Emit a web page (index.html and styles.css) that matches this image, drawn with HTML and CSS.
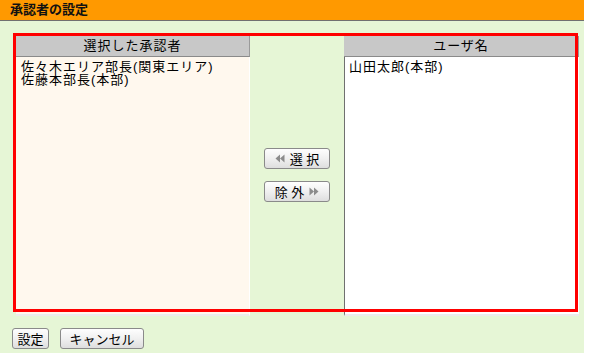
FILE: index.html
```html
<!DOCTYPE html>
<html lang="ja">
<head>
  <meta charset="UTF-8">
  <title>承認者の設定</title>
  <link rel="stylesheet" href="styles.css">
</head>
<body>
  <div class="page">
    <!-- Title -->
    <div class="title-bar">承認者の設定</div>

    <div class="panel">
      <!-- Approver chooser -->
      <div class="chooser">
        <div class="col">
          <div class="col-head">選択した承認者</div>
          <div class="list list-selected">
            <div class="item">佐々木エリア部長(関東エリア)</div>
            <div class="item">佐藤本部長(本部)</div>
          </div>
        </div>

        <div class="col-mid">
          <button class="btn btn-move">
            <svg class="arrow" width="10" height="9" viewBox="0 0 10 9"><path d="M5 0.5 L0.5 4.5 L5 8.5 Z M9.5 0.5 L5 4.5 L9.5 8.5 Z" fill="#8c8c8c"/></svg>
            <span>選 択</span>
          </button>
          <button class="btn btn-move">
            <span>除 外</span>
            <svg class="arrow" width="10" height="9" viewBox="0 0 10 9"><path d="M0.5 0.5 L5 4.5 L0.5 8.5 Z M5 0.5 L9.5 4.5 L5 8.5 Z" fill="#8c8c8c"/></svg>
          </button>
        </div>

        <div class="col">
          <div class="col-head">ユーザ名</div>
          <div class="list list-users">
            <div class="item">山田太郎(本部)</div>
          </div>
        </div>

        <div class="highlight"></div>
      </div>

      <!-- Actions -->
      <div class="actions">
        <button class="btn btn-action">設定</button>
        <button class="btn btn-action btn-wide">キャンセル</button>
      </div>
    </div>
  </div>
</body>
</html>
```

FILE: styles.css
```css
/* Global */
:root {
  --orange: #ff9900;
  --green: #e6f6d6;
  --cream: #fff8ee;
  --head-gray: #c8c8c8;
  --line-dark: #707070;
  --mark: #ff0000;
}

* {
  margin: 0;
  padding: 0;
  box-sizing: border-box;
}

body {
  font-family: "Liberation Sans", "Noto Sans CJK JP", sans-serif;
  font-size: 13px;
  color: #000;
  background-color: #ffffff;
}

.page {
  width: 584px;
  min-height: 353px;
  background-color: var(--green);
}

/* Title */
.title-bar {
  height: 21px;
  padding-left: 10px;
  background-color: var(--orange);
  border-bottom: 1px solid var(--line-dark);
  font-weight: 700;
  font-size: 13px;
  line-height: 19px;
  color: #111;
}

.panel {
  padding-top: 15px;
}

/* Chooser */
.chooser {
  position: relative;
  display: grid;
  grid-template-columns: 234px 94px 235px;
  height: 280px;
  margin-left: 16px;
}

.col {
  display: flex;
  flex-direction: column;
}

.col-head {
  height: 21px;
  background-color: var(--head-gray);
  border-bottom: 1px solid #8a8a8a;
  border-right: 1px solid #9a9a9a;
  text-align: center;
  line-height: 20px;
  letter-spacing: 1px;
}

.list {
  flex: 1;
  padding: 3px 5px;
  line-height: 13px;
  letter-spacing: 1px;
  border-bottom: 2px solid #ececec;
}

.item {
  white-space: nowrap;
}

.list-selected {
  background-color: var(--cream);
  border-right: 1px solid #ffffff;
}

.list-users {
  background-color: #ffffff;
  border-left: 1px solid var(--line-dark);
  padding-left: 4px;
}

.col-mid {
  display: flex;
  flex-direction: column;
  align-items: center;
  justify-content: center;
  gap: 12px;
  padding-bottom: 2px;
}

/* Buttons */
.btn {
  display: inline-flex;
  align-items: center;
  justify-content: center;
  gap: 5px;
  height: 21px;
  border: 1px solid #8a8a8a;
  border-radius: 3px;
  background: linear-gradient(#fefefe, #f0f0f0 50%, #dedede);
  font-family: "Liberation Sans", "Noto Sans CJK JP", sans-serif;
  font-size: 13px;
  color: #000;
  cursor: pointer;
}

.btn-move {
  width: 66px;
}

.arrow {
  display: block;
}

.btn-action {
  width: 37px;
}

.btn-wide {
  width: 84px;
}

.actions {
  display: flex;
  gap: 11px;
  margin: 12px 0 0 12px;
}

/* Red mark drawn over the chooser */
.highlight {
  position: absolute;
  left: -3px;
  top: -3px;
  width: 565px;
  height: 279px;
  border: 3px solid var(--mark);
  pointer-events: none;
}
```
